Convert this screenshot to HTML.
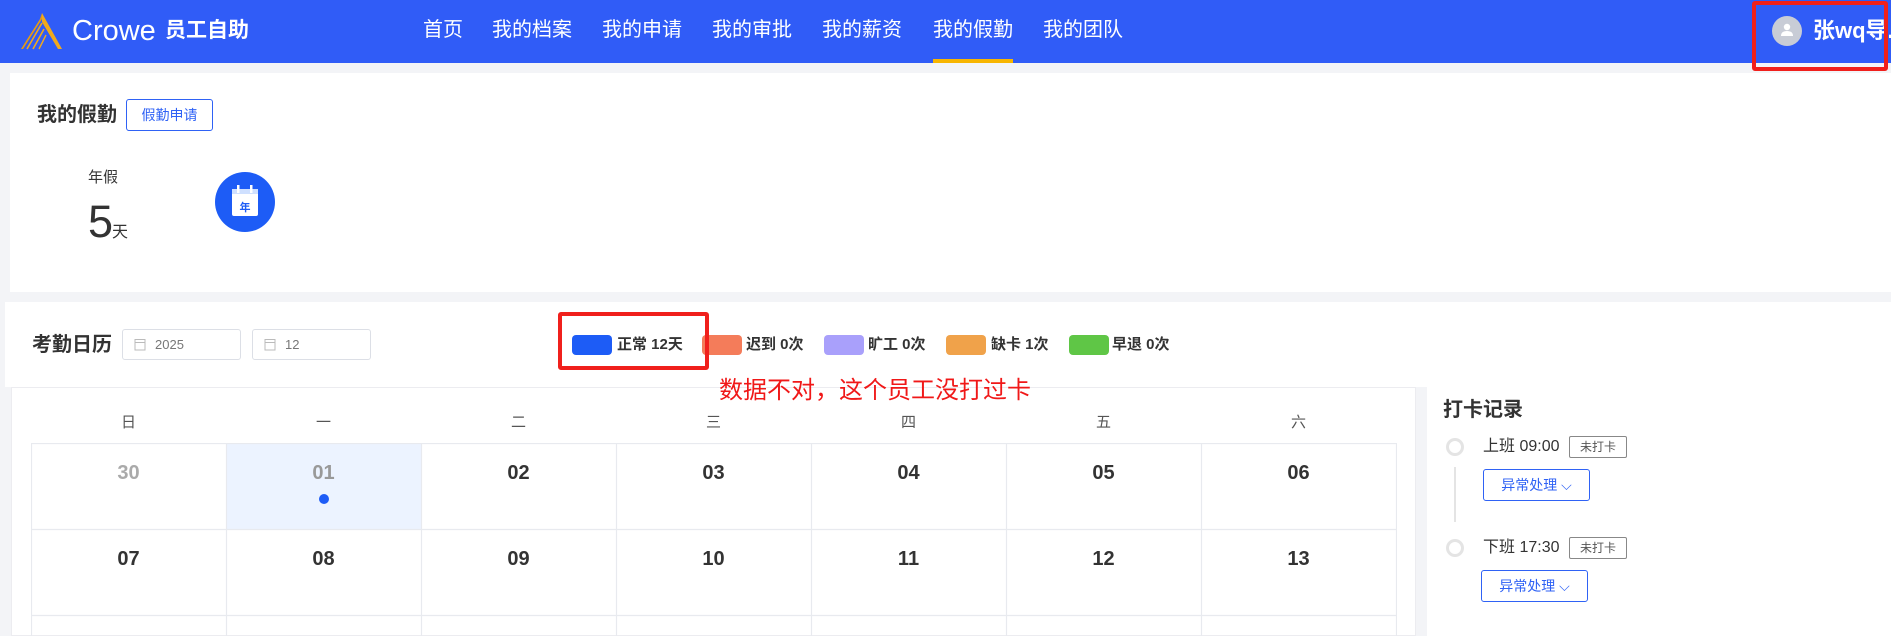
<!DOCTYPE html>
<html><head><meta charset="utf-8"><style>
*{margin:0;padding:0;box-sizing:border-box}
body{width:1891px;height:636px;overflow:hidden;background:#f3f4f7;font-family:"Liberation Sans","Noto Sans CJK SC",sans-serif;position:relative;color:#333}
.a{position:absolute;white-space:nowrap}
.hdr{left:0;top:0;width:1891px;height:63px;background:#305cf7}
.nav{top:17px;font-size:20px;color:#fff;line-height:26px}
.card{background:#fff}
.num{font-size:20px;font-weight:bold;width:195px;text-align:center;top:462px;line-height:22px}
.wk{font-size:15px;color:#555;width:195px;text-align:center;top:411px}
.sw{width:40px;height:20px;border-radius:4px;top:335px}
.lt{font-size:15px;font-weight:bold;top:335px;line-height:20px}
.tag{font-size:12px;color:#555;border:1px solid #888;border-radius:2px;width:58px;height:22px;line-height:20px;text-align:center}
.btn{border:1px solid #2f62f5;border-radius:3px;color:#2f62f5;font-size:14px;width:107px;height:32px;line-height:30px;text-align:center}
.tc{width:18px;height:18px;border:3px solid #e4e4e4;border-radius:50%;background:#fff}
</style></head><body>
<div class="a hdr"></div>
<svg class="a" style="left:0;top:0" width="70" height="60" viewBox="0 0 70 60"><polygon points="42,13 62,49 58,49 42,22" fill="#f0a91c"/><polygon points="42,13 40,19 21,49 23,49 42,19" fill="#e59a14"/><line x1="42" y1="23" x2="27" y2="49" stroke="#f0a91c" stroke-width="1.6"/><line x1="44" y1="29" x2="33" y2="49" stroke="#f0a91c" stroke-width="1.6"/><line x1="46" y1="35" x2="39" y2="49" stroke="#f0a91c" stroke-width="1.4"/></svg>
<div class="a" style="left:72px;top:14px;font-size:29px;color:#fff;line-height:34px">Crowe</div>
<div class="a" style="left:165px;top:18px;font-size:21px;font-weight:bold;color:#fff;line-height:26px">员工自助</div>
<div class="a nav" style="left:423px">首页</div>
<div class="a nav" style="left:492px">我的档案</div>
<div class="a nav" style="left:602px">我的申请</div>
<div class="a nav" style="left:712px">我的审批</div>
<div class="a nav" style="left:822px">我的薪资</div>
<div class="a nav" style="left:933px">我的假勤</div>
<div class="a nav" style="left:1043px">我的团队</div>
<div class="a" style="left:933px;top:59px;width:80px;height:4px;background:#f7b500"></div>
<div class="a" style="left:1772px;top:16px;width:30px;height:30px;border-radius:50%;background:#c8ccd6"></div>
<svg class="a" style="left:1779px;top:22px" width="16" height="16" viewBox="0 0 16 16"><circle cx="8" cy="5" r="3.2" fill="#fff"/><path d="M2 14 Q2 9 8 9 Q14 9 14 14Z" fill="#fff"/></svg>
<div class="a" style="left:1813px;top:18px;font-size:22px;font-weight:bold;color:#fff;line-height:26px">张wq导.</div>
<div class="a" style="left:1752px;top:1px;width:136px;height:70px;border:4px solid #f0201c;border-radius:3px"></div>

<div class="a card" style="left:10px;top:73px;width:1881px;height:219px"></div>
<div class="a" style="left:37px;top:103px;font-size:20px;font-weight:bold;line-height:24px">我的假勤</div>
<div class="a" style="left:126px;top:99px;width:87px;height:32px;border:1px solid #2f62f5;border-radius:3px;color:#2f62f5;font-size:14px;line-height:30px;text-align:center">假勤申请</div>
<div class="a" style="left:88px;top:169px;font-size:15px;line-height:18px">年假</div>
<div class="a" style="left:88px;top:199px;font-size:45px;line-height:46px">5</div>
<div class="a" style="left:112px;top:224px;font-size:16px;line-height:18px">天</div>
<div class="a" style="left:215px;top:172px;width:60px;height:60px;border-radius:50%;background:#1d5cf6"></div>
<svg class="a" style="left:230px;top:184px" width="30" height="36" viewBox="0 0 30 36"><rect x="2" y="5" width="26" height="27" rx="2" fill="#fff"/><rect x="2" y="5" width="26" height="5" fill="#cfe0ff"/><rect x="7" y="1" width="2.5" height="8" fill="#fff"/><rect x="20" y="1" width="2.5" height="8" fill="#fff"/><text x="15" y="27" font-size="11" font-weight="bold" fill="#1d5cf6" text-anchor="middle" font-family="Noto Sans CJK SC">年</text></svg>

<div class="a card" style="left:5px;top:302px;width:1886px;height:85px"></div>
<div class="a" style="left:32px;top:333px;font-size:20px;font-weight:bold;line-height:24px">考勤日历</div>
<div class="a" style="left:122px;top:329px;width:119px;height:31px;border:1px solid #dcdfe6;border-radius:3px"></div>
<div class="a" style="left:252px;top:329px;width:119px;height:31px;border:1px solid #dcdfe6;border-radius:3px"></div>
<svg class="a" style="left:134px;top:338px" width="12" height="13"><rect x="1" y="1.5" width="10" height="10.5" fill="none" stroke="#bbb"/><line x1="1" y1="4.5" x2="11" y2="4.5" stroke="#bbb"/></svg>
<svg class="a" style="left:264px;top:338px" width="12" height="13"><rect x="1" y="1.5" width="10" height="10.5" fill="none" stroke="#bbb"/><line x1="1" y1="4.5" x2="11" y2="4.5" stroke="#bbb"/></svg>
<div class="a" style="left:155px;top:337px;font-size:13px;color:#777">2025</div>
<div class="a" style="left:285px;top:337px;font-size:13px;color:#777">12</div>
<div class="a sw" style="left:572px;background:#1d5cf6"></div><div class="a lt" style="left:617px">正常 12天</div>
<div class="a sw" style="left:702px;background:#f47c5a"></div><div class="a lt" style="left:746px">迟到 0次</div>
<div class="a sw" style="left:824px;background:#a9a0fb"></div><div class="a lt" style="left:868px">旷工 0次</div>
<div class="a sw" style="left:946px;background:#f0a24a"></div><div class="a lt" style="left:991px">缺卡 1次</div>
<div class="a sw" style="left:1069px;background:#5fc646"></div><div class="a lt" style="left:1112px">早退 0次</div>
<div class="a" style="left:558px;top:312px;width:151px;height:58px;border:4px solid #f0201c;border-radius:3px"></div>

<div class="a card" style="left:11px;top:387px;width:1405px;height:249px;border:1px solid #ececf0"></div>
<div class="a card" style="left:1427px;top:387px;width:464px;height:249px"></div>
<div class="a" style="left:1416px;top:387px;width:11px;height:10px;background:#f3f4f7"></div>
<div class="a" style="left:719px;top:376px;font-size:24px;color:#f01818;line-height:30px">数据不对，这个员工没打过卡</div>

<div class="a wk" style="left:31px">日</div><div class="a wk" style="left:226px">一</div><div class="a wk" style="left:421px">二</div><div class="a wk" style="left:616px">三</div><div class="a wk" style="left:811px">四</div><div class="a wk" style="left:1006px">五</div><div class="a wk" style="left:1201px">六</div>
<div class="a" style="left:226px;top:443px;width:195px;height:86px;background:#ecf3ff"></div>
<svg class="a" style="left:31px;top:443px" width="1366" height="193"><g stroke="#e8eaef" stroke-width="1.2" fill="none"><line x1="0" y1="0.5" x2="1366" y2="0.5"/><line x1="0" y1="86.5" x2="1366" y2="86.5"/><line x1="0" y1="172.5" x2="1366" y2="172.5"/><line x1="0.5" y1="0" x2="0.5" y2="193"/><line x1="195.5" y1="0" x2="195.5" y2="193"/><line x1="390.5" y1="0" x2="390.5" y2="193"/><line x1="585.5" y1="0" x2="585.5" y2="193"/><line x1="780.5" y1="0" x2="780.5" y2="193"/><line x1="975.5" y1="0" x2="975.5" y2="193"/><line x1="1170.5" y1="0" x2="1170.5" y2="193"/><line x1="1365.5" y1="0" x2="1365.5" y2="193"/></g></svg>
<div class="a num" style="left:31px;color:#aaa">30</div><div class="a num" style="left:226px;color:#999">01</div><div class="a num" style="left:421px">02</div><div class="a num" style="left:616px">03</div><div class="a num" style="left:811px">04</div><div class="a num" style="left:1006px">05</div><div class="a num" style="left:1201px">06</div>
<div class="a" style="left:319px;top:494px;width:10px;height:10px;border-radius:50%;background:#1d5cf6"></div>
<div class="a num" style="left:31px;top:548px">07</div><div class="a num" style="left:226px;top:548px">08</div><div class="a num" style="left:421px;top:548px">09</div><div class="a num" style="left:616px;top:548px">10</div><div class="a num" style="left:811px;top:548px">11</div><div class="a num" style="left:1006px;top:548px">12</div><div class="a num" style="left:1201px;top:548px">13</div>

<div class="a" style="left:1443px;top:398px;font-size:20px;font-weight:bold;line-height:24px">打卡记录</div>
<div class="a tc" style="left:1446px;top:438px"></div>
<div class="a" style="left:1454px;top:467px;width:2px;height:55px;background:#e4e4e4"></div>
<div class="a" style="left:1483px;top:437px;font-size:16px;line-height:20px">上班 09:00</div>
<div class="a tag" style="left:1569px;top:436px">未打卡</div>
<div class="a btn" style="left:1483px;top:469px">异常处理 ⌵</div>
<div class="a tc" style="left:1446px;top:539px"></div>
<div class="a" style="left:1483px;top:538px;font-size:16px;line-height:20px">下班 17:30</div>
<div class="a tag" style="left:1569px;top:537px">未打卡</div>
<div class="a btn" style="left:1481px;top:570px">异常处理 ⌵</div>
</body></html>
